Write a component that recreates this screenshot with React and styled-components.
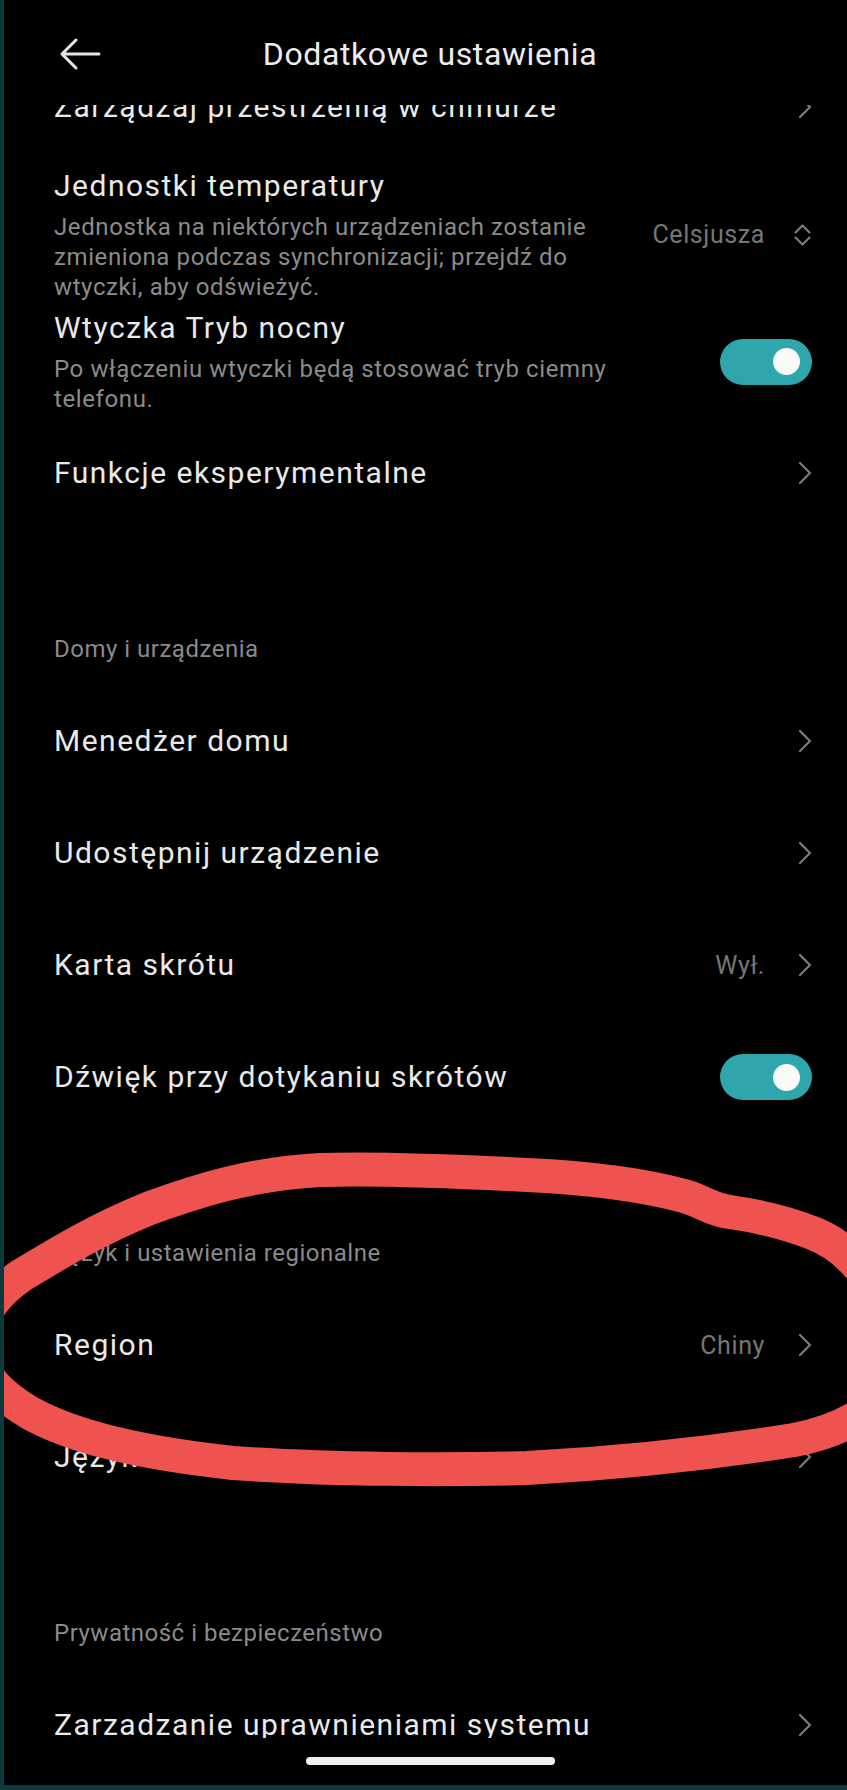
import React from "react";
import styled, { createGlobalStyle } from "styled-components";

const GlobalStyle = createGlobalStyle`
  html, body {
    margin: 0;
    padding: 0;
    background: #000;
  }
  body {
    font-family: Roboto, "Noto Sans", "Liberation Sans", sans-serif;
    -webkit-font-smoothing: antialiased;
  }
`;

const sections = [
  {
    rows: [
      { title: "Zarządzaj przestrzenią w chmurze", chevron: true },
      {
        title: "Jednostki temperatury",
        lines: [
          "Jednostka na niektórych urządzeniach zostanie",
          "zmieniona podczas synchronizacji; przejdź do",
          "wtyczki, aby odświeżyć.",
        ],
        value: "Celsjusza",
        updown: true,
      },
      {
        title: "Wtyczka Tryb nocny",
        lines: ["Po włączeniu wtyczki będą stosować tryb ciemny", "telefonu."],
        toggle: true,
      },
      { title: "Funkcje eksperymentalne", chevron: true },
    ],
  },
  {
    label: "Domy i urządzenia",
    rows: [
      { title: "Menedżer domu", chevron: true },
      { title: "Udostępnij urządzenie", chevron: true },
      { title: "Karta skrótu", value: "Wył.", chevron: true },
      { title: "Dźwięk przy dotykaniu skrótów", toggle: true },
    ],
  },
  {
    label: "Język i ustawienia regionalne",
    rows: [
      { title: "Region", value: "Chiny", chevron: true },
      { title: "Język", chevron: true },
    ],
  },
  {
    label: "Prywatność i bezpieczeństwo",
    rows: [{ title: "Zarzadzanie uprawnieniami systemu", chevron: true }],
  },
];

function Chevron() {
  return (
    <svg width="14" height="24" viewBox="0 0 14 24">
      <path d="M2 2 L12 12 L2 22" fill="none" stroke="#7c7c7c" strokeWidth="2.2" strokeLinecap="round" strokeLinejoin="round" />
    </svg>
  );
}

function UpDown() {
  return (
    <svg width="19" height="24" viewBox="0 0 19 24">
      <path d="M2.5 9.5 L9.5 2.5 L16.5 9.5 M2.5 14.5 L9.5 21.5 L16.5 14.5" fill="none" stroke="#7c7c7c" strokeWidth="2.2" strokeLinecap="round" strokeLinejoin="round" />
    </svg>
  );
}

function BackArrow() {
  return (
    <svg width="42" height="34" viewBox="0 0 42 34">
      <path d="M40 17 H3 M17 3 L3 17 L17 31" fill="none" stroke="#e6e6e6" strokeWidth="3" strokeLinecap="round" strokeLinejoin="round" />
    </svg>
  );
}

function App() {
  return (
    <>
      <GlobalStyle />
      <Page>
        <Header>
          <BackSlot>
            <BackArrow />
          </BackSlot>
          <Title>Dodatkowe ustawienia</Title>
          <span />
        </Header>

        <Viewport>
          <List>
            {sections.map((section, si) => (
              <React.Fragment key={si}>
                {section.label && <SectionLabel>{section.label}</SectionLabel>}
                {section.rows.map((row) => (
                  <Row key={row.title} $compact={!!row.lines}>
                    <RowText>
                      <RowTitle>{row.title}</RowTitle>
                      {row.lines && (
                        <RowSub>
                          {row.lines.map((l) => (
                            <SubLine key={l}>{l}</SubLine>
                          ))}
                        </RowSub>
                      )}
                    </RowText>
                    {row.value && <Value $wide={row.updown}>{row.value}</Value>}
                    {row.updown && <UpDown />}
                    {row.chevron && <Chevron />}
                    {row.toggle && (
                      <Toggle>
                        <Knob />
                      </Toggle>
                    )}
                  </Row>
                ))}
              </React.Fragment>
            ))}
          </List>
        </Viewport>

        <BottomBar>
          <HomeIndicator />
        </BottomBar>

        <Scribble viewBox="4 0 843 1785" width="843" height="1785">
          <path
            d="M878 1296
               C862 1264, 838 1242, 810 1232
               C784 1222, 758 1216, 730 1212
               C712 1210, 700 1200, 684 1196
               C640 1184, 590 1178, 527 1175
               C450 1171, 380 1168, 320 1170
               C250 1174, 200 1190, 150 1208
               C100 1228, 60 1252, 22 1275
               C-8 1295, -22 1320, -22 1345
               C-22 1375, 0 1395, 30 1413
               C70 1435, 130 1452, 233 1463
               C330 1470, 450 1470, 527 1468
               C600 1464, 700 1455, 794 1440
               C830 1433, 860 1420, 882 1398"
            fill="none"
            stroke="#ee5350"
            strokeWidth="34"
            strokeLinecap="round"
            strokeLinejoin="round"
          />
        </Scribble>
      </Page>
    </>
  );
}

const Page = styled.div`
  position: relative;
  width: 847px;
  height: 1790px;
  box-sizing: border-box;
  background: #000;
  border-left: 4px solid #0b3a3e;
  border-bottom: 5px solid #0b3a3e;
  display: flex;
  flex-direction: column;
  overflow: hidden;
`;

const Header = styled.div`
  flex: none;
  position: relative;
  z-index: 1;
  height: 105px;
  box-sizing: border-box;
  padding-top: 3px;
  background: #000;
  display: grid;
  grid-template-columns: 1fr auto 1fr;
  align-items: center;
`;

const BackSlot = styled.div`
  display: flex;
  align-items: center;
  padding-left: 55px;
`;

const Title = styled.div`
  font-size: 32px;
  color: #ececec;
  letter-spacing: 0.6px;
  padding-left: 9px;
`;

const Viewport = styled.div`
  flex: 1;
  overflow: hidden;
`;

const List = styled.div`
  margin-top: -54px;
  display: flex;
  flex-direction: column;
`;

const SectionLabel = styled.div`
  padding: 105px 50px 21px;
  font-size: 24px;
  line-height: 30px;
  color: #8a8a8a;
  letter-spacing: 0.5px;
`;

const Row = styled.div`
  display: flex;
  align-items: center;
  box-sizing: border-box;
  min-height: ${(p) => (p.$compact ? "auto" : "112px")};
  padding: ${(p) => (p.$compact ? "4px" : "0")} 35px ${(p) => (p.$compact ? "3px" : "0")} 50px;
`;

const RowText = styled.div`
  flex: 1;
  min-width: 0;
`;

const RowTitle = styled.div`
  font-size: 30px;
  line-height: 38px;
  color: #e9e9e9;
  letter-spacing: 1.5px;
  white-space: nowrap;
`;

const RowSub = styled.div`
  margin-top: 7px;
  font-size: 24px;
  line-height: 30px;
  color: #8b8b8b;
  letter-spacing: 0.6px;
`;

const SubLine = styled.div`
  white-space: nowrap;
`;

const Value = styled.div`
  font-size: 25px;
  color: #767676;
  letter-spacing: 0.6px;
  margin-right: ${(p) => (p.$wide ? "28px" : "33px")};
`;

const Toggle = styled.div`
  width: 92px;
  height: 46px;
  border-radius: 23px;
  background: #2ea6ab;
  display: flex;
  align-items: center;
  justify-content: flex-end;
  padding-right: 12px;
  box-sizing: border-box;
`;

const Knob = styled.div`
  width: 27px;
  height: 27px;
  border-radius: 50%;
  background: #fafafa;
`;

const BottomBar = styled.div`
  flex: none;
  height: 47px;
  box-sizing: border-box;
  padding: 19px 0 0 9px;
  display: flex;
  justify-content: center;
  background: #000;
`;

const HomeIndicator = styled.div`
  width: 249px;
  height: 8px;
  border-radius: 4px;
  background: #f0f0f0;
`;

const Scribble = styled.svg`
  position: absolute;
  left: 0;
  top: 0;
  pointer-events: none;
  z-index: 2;
`;

export default App;
